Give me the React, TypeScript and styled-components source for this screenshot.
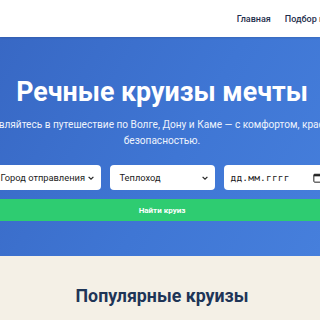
import React from 'react';
import styled, { createGlobalStyle } from 'styled-components';

const GlobalStyle = createGlobalStyle`
  html, body {
    margin: 0;
    padding: 0;
    overflow-x: hidden;
  }
  body {
    font-family: Roboto, 'Liberation Sans', sans-serif;
    background: #f4f0e6;
  }
`

const Header = styled.header`
  height: 37px;
  background: #ffffff;
  display: flex;
  justify-content: flex-end;
  align-items: center;
  box-shadow: 0 1px 2px rgba(0, 0, 0, 0.12);
  position: relative;
  z-index: 1;
`

const Nav = styled.nav`
  display: flex;
  gap: 14px;
  margin-right: -28px;
  white-space: nowrap;
`

const NavLink = styled.a`
  font-size: 9px;
  font-weight: 500;
  color: #1f2f4d;
  text-decoration: none;
`

const Hero = styled.section`
  height: 219px;
  background: linear-gradient(120deg, #3868c4 0%, #3f76d4 55%, #467fdc 100%);
  display: flex;
  flex-direction: column;
  align-items: center;
  padding: 38px 0 0 4px;
  box-sizing: border-box;
  color: #ffffff;
`

const Title = styled.h1`
  margin: 0;
  font-size: 26.8px;
  font-weight: 700;
  line-height: 34px;
  white-space: nowrap;
`

const Subtitle = styled.p`
  margin: 8px 0 0;
  width: 396px;
  flex-shrink: 0;
  font-size: 10.1px;
  line-height: 16px;
  text-align: center;
  color: #eef3fc;
`

const Form = styled.form`
  margin-top: 16px;
  width: 333px;
  flex-shrink: 0;
  display: flex;
  flex-direction: column;
  gap: 9px;
`

const Fields = styled.div`
  display: grid;
  grid-template-columns: 1fr 1fr 1fr;
  gap: 9px;
`

const Field = styled.div<{ $pad?: number }>`
  height: 25px;
  background: #ffffff;
  border-radius: 4px;
  display: flex;
  align-items: center;
  justify-content: space-between;
  padding: 0 6px 0 ${(p) => p.$pad ?? 8}px;
  font-size: 9.3px;
  color: #1b1b1b;
  white-space: nowrap;
  overflow: hidden;
`

const DateText = styled.span`
  font-family: 'DejaVu Sans Mono', 'Liberation Mono', monospace;
  font-size: 9.5px;
  letter-spacing: 0.2px;
`

const Button = styled.button`
  height: 22px;
  border: none;
  border-radius: 3px;
  background: #2ecc71;
  color: #ffffff;
  font-family: inherit;
  font-size: 8px;
  font-weight: 700;
`

const Section = styled.section`
  background: #f4f0e6;
  padding: 29px 0 0 4px;
  display: flex;
  justify-content: center;
`

const SectionTitle = styled.h2`
  margin: 0;
  font-size: 17.8px;
  font-weight: 700;
  color: #1e3557;
`

const Chevron = () => (
  <svg width="8" height="8" viewBox="0 0 10 10">
    <path d="M2 3.5 L5 6.5 L8 3.5" fill="none" stroke="#222" strokeWidth="1.5" />
  </svg>
)

const CalendarIcon = () => (
  <svg width="10" height="10" viewBox="0 0 12 12">
    <rect x="1" y="1.5" width="10" height="9.5" rx="1" fill="none" stroke="#222" strokeWidth="1.2" />
    <rect x="1" y="1.5" width="10" height="2.5" fill="#222" />
  </svg>
)

export default function App() {
  return (
    <>
      <GlobalStyle />
      <Header>
        <Nav>
          <NavLink href="#">Главная</NavLink>
          <NavLink href="#">Подбор круиза</NavLink>
        </Nav>
      </Header>
      <Hero>
        <Title>Речные круизы мечты</Title>
        <Subtitle>
          Отправляйтесь в путешествие по Волге, Дону и Каме — с комфортом, красотой и безопасностью.
        </Subtitle>
        <Form onSubmit={(e) => e.preventDefault()}>
          <Fields>
            <Field $pad={5}>
              <span>Город отправления</span>
              <Chevron />
            </Field>
            <Field $pad={10}>
              <span>Теплоход</span>
              <Chevron />
            </Field>
            <Field $pad={7}>
              <DateText>дд.мм.гггг</DateText>
              <CalendarIcon />
            </Field>
          </Fields>
          <Button type="submit">Найти круиз</Button>
        </Form>
      </Hero>
      <Section>
        <SectionTitle>Популярные круизы</SectionTitle>
      </Section>
    </>
  );
}
